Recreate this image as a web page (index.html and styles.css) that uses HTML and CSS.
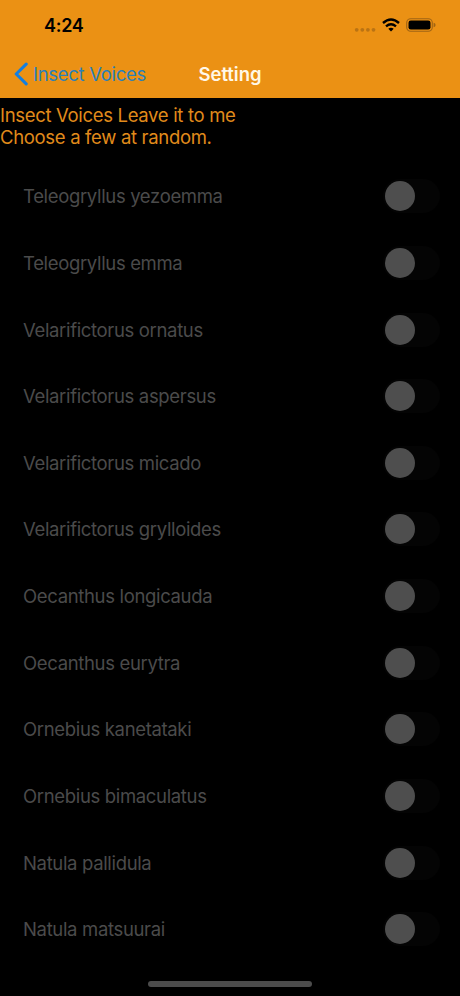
FILE: index.html
```html
<!DOCTYPE html>
<html lang="en">
<head>
<meta charset="utf-8">
<title>Setting</title>
<link rel="stylesheet" href="styles.css">
</head>
<body>
<header class="header">
  <div class="status">
    <span class="time">4:24</span>
    <div class="indicators">
      <svg class="dots" width="22" height="18" viewBox="0 0 22 18" fill="#ba7313"><circle cx="2.7" cy="13.8" r="1.9"/><circle cx="8.3" cy="13.8" r="1.9"/><circle cx="13.9" cy="13.8" r="1.9"/><circle cx="19.5" cy="13.8" r="1.9"/></svg>
      <svg class="wifi" width="18" height="14" viewBox="0 0 18 14" fill="none" stroke="#000" stroke-width="2.4"><path d="M1 5Q9-1.9 17 5"/><path d="M4 8.3Q9 4.1 14 8.3"/><path d="M6.3 10.7Q9 8.7 11.7 10.7L9 13.5Z" fill="#000" stroke="none"/></svg>
      <svg class="battery" width="30" height="14" viewBox="0 0 30 14"><rect x=".7" y=".7" width="25.6" height="12.6" rx="4" fill="none" stroke="#a06414" stroke-width="1.1"/><rect x="2.5" y="2.4" width="22" height="9.2" rx="2.3"/><path d="M27.6 4.7Q29.6 5.3 29.6 7T27.6 9.3Z" fill="#a06414"/></svg>
    </div>
  </div>
  <nav class="nav">
    <a class="back"><svg class="chevron" width="14" height="24" viewBox="0 0 14 24" fill="none" stroke="#147fe0" stroke-width="3.1" stroke-linecap="round" stroke-linejoin="round"><path d="M12.2 2.2L2.2 12L12.2 21.8"/></svg><span class="back-label">Insect Voices</span></a>
    <h1 class="title">Setting</h1>
  </nav>
</header>
<main>
  <p class="intro"><span class="intro-line">Insect Voices Leave it to me</span><span class="intro-line second">Choose a few at random.</span></p>
  <ul class="list">
    <li class="row"><span>Teleogryllus yezoemma</span><i class="switch"></i></li>
    <li class="row"><span>Teleogryllus emma</span><i class="switch"></i></li>
    <li class="row"><span>Velarifictorus ornatus</span><i class="switch"></i></li>
    <li class="row"><span>Velarifictorus aspersus</span><i class="switch"></i></li>
    <li class="row"><span>Velarifictorus micado</span><i class="switch"></i></li>
    <li class="row"><span>Velarifictorus grylloides</span><i class="switch"></i></li>
    <li class="row"><span>Oecanthus longicauda</span><i class="switch"></i></li>
    <li class="row"><span>Oecanthus eurytra</span><i class="switch"></i></li>
    <li class="row"><span>Ornebius kanetataki</span><i class="switch"></i></li>
    <li class="row"><span>Ornebius bimaculatus</span><i class="switch"></i></li>
    <li class="row"><span>Natula pallidula</span><i class="switch"></i></li>
    <li class="row"><span>Natula matsuurai</span><i class="switch"></i></li>
  </ul>
</main>
<div class="home"></div>
</body>
</html>
```
FILE: styles.css
```css
* { box-sizing: border-box; }
body {
  margin: 0;
  height: 996px;
  overflow: hidden;
  background: #000;
  font-family: Inter, "Liberation Sans", sans-serif;
}
.header { height: 98px; background: #eb9114; }
.status {
  height: 50px;
  padding: 0 24px 0 44px;
  display: flex;
  justify-content: space-between;
  align-items: center;
}
.time { font-size: 18px; font-weight: 600; line-height: 22px; letter-spacing: -0.3px; margin-top: 1px; }
.indicators { display: flex; align-items: center; }
.dots { margin: 0 6px 0 0; }
.wifi { margin-right: 6px; }
.nav {
  height: 48px;
  padding: 0 14px;
  display: grid;
  grid-template-columns: 1fr auto 1fr;
  align-items: center;
}
.back { display: flex; align-items: center; gap: 5px; color: #2b80b9; white-space: nowrap; }
.back-label { font-size: 18.5px; line-height: 24px; letter-spacing: -0.3px; }
.title { margin: 0; color: #fff8e8; font-size: 18.5px; font-weight: 600; line-height: 24px; letter-spacing: 0; }
.intro { margin: 0; padding: 6px 0 0 0; color: #e18b1b; height: 65px; font-size: 18.5px; line-height: 22px; letter-spacing: -0.32px; }
.intro-line { display: block; }
.list { margin: 0; padding: 0; list-style: none; }
.row {
  height: 66.64px;
  padding: 0 20px 0 23px;
  display: flex;
  align-items: center;
  justify-content: space-between;
  color: #4b4b4b;
  font-size: 18.5px;
  line-height: 24px;
  letter-spacing: -0.34px;
}
.switch { width: 57px; height: 34px; padding: 2px; border-radius: 17px; background: #040404; }
.switch::before { content: ""; display: block; width: 30px; height: 30px; border-radius: 50%; background: #4e4e4e; }
.home { width: 164px; height: 6px; margin: 18px auto 0; border-radius: 3px; background: #4c4c4c; }
```
